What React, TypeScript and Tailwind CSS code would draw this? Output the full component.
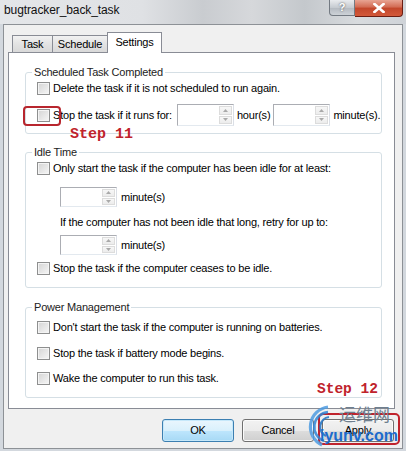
import React from "react";

const Check = () => (
  <span className="block w-[13px] h-[13px] shrink-0 border border-[#8e8f8f] bg-[linear-gradient(135deg,#d4d4d4,#f6f6f6)] shadow-[inset_0_0_0_1px_#f4f4f4]" />
);

const Arrow = ({ up }: { up?: boolean }) => (
  <svg width="5" height="3" viewBox="0 0 5 3">
    {up ? <path d="M0 3 L2.5 0 L5 3 Z" fill="#a9a9a9" /> : <path d="M0 0 L2.5 3 L5 0 Z" fill="#a9a9a9" />}
  </svg>
);

const Spin = ({ h }: { h: string }) => (
  <div className={`flex w-[57px] ${h} border border-[#abadb3] border-b-[#e3e9ef] border-r-[#dbdfe6] bg-white shrink-0`}>
    <div className="flex-1" />
    <div className="flex flex-col w-[15px] gap-px p-px">
      <div className="flex-1 flex items-center justify-center border border-[#dcdcdc] bg-[linear-gradient(#f7f7f7,#ececec)]">
        <Arrow up />
      </div>
      <div className="flex-1 flex items-center justify-center border border-[#dcdcdc] bg-[linear-gradient(#f7f7f7,#ececec)]">
        <Arrow />
      </div>
    </div>
  </div>
);

const Row = ({ children, cls }: { children: React.ReactNode; cls: string }) => (
  <div className={`flex items-center h-[16px] pl-[11px] gap-[3px] ${cls}`}>
    <Check />
    <span className="whitespace-nowrap">{children}</span>
  </div>
);

const Group = ({ title, cls, children }: { title: string; cls: string; children: React.ReactNode }) => (
  <fieldset className={`ml-[16px] mr-[12px] border border-[#d5dfe5] rounded-[3px] ${cls}`}>
    <legend className="ml-[6px] px-[2px] h-[15px] leading-[15px] text-[#222]">{title}</legend>
    {children}
  </fieldset>
);

const Btn = ({ label, def }: { label: string; def?: boolean }) => (
  <div
    className={`w-[72px] h-[23px] rounded-[3px] flex items-center justify-center border ${
      def
        ? "border-[#3c7fb1] bg-[linear-gradient(#eaf6fd_0%,#d9f0fc_50%,#bee6fd_51%,#a7d9f5_100%)] shadow-[inset_0_0_0_1px_#c6e8fa]"
        : "border-[#707070] bg-[linear-gradient(#f2f2f2_0%,#ebebeb_50%,#dddddd_51%,#cfcfcf_100%)] shadow-[inset_0_0_0_1px_#fbfbfb]"
    }`}
  >
    {label}
  </div>
);

export default function App() {
  return (
    <div className="relative w-[406px] h-[451px] overflow-hidden bg-[#d3d8de] font-['Liberation_Sans',Arial,sans-serif] text-[11px] tracking-[-0.2px] text-black">
      {/* title bar */}
      <div className="flex h-[24px] bg-[linear-gradient(90deg,#e4e6e9_0%,#dfe1e4_35%,#c9ccd0_50%,#d6d8db_62%,#c4c8cc_75%,#d8dbde_88%,#cfd3d8_100%)]">
        <div className="pl-[4px] pt-[3px] text-[12px] leading-[15px] tracking-[-0.1px] text-[#111]">bugtracker_back_task</div>
        <div className="ml-auto flex items-start mr-[3px]">
          <div className="w-[26px] h-[16px] rounded-bl-[4px] border border-t-0 border-[#737a82] bg-[linear-gradient(#e9ebee,#c6cbd1_50%,#b3b9c0_51%,#cdd2d7)] flex items-center justify-center text-[11px] font-bold text-white [text-shadow:0_0_2px_#444]">
            ?
          </div>
          <div className="w-[48px] h-[17px] rounded-br-[4px] border border-t-0 border-l-0 border-[#6b1d12] bg-[linear-gradient(#e8a493,#d26a52_45%,#c2462b_50%,#d3593a_100%)] flex items-center justify-center">
            <svg width="12" height="10" viewBox="0 0 12 10">
              <path d="M1.5 1 L10.5 9 M10.5 1 L1.5 9" stroke="#ffffff" strokeWidth="2.6" strokeLinecap="square" />
            </svg>
          </div>
        </div>
      </div>

      {/* client area */}
      <div className="mx-[3px] h-[425px] border border-[#8d9196] bg-[#f0f0f0] flex flex-col">
        {/* tabs */}
        <div className="mt-[7px] ml-[8px] h-[20px] flex items-end">
          <div className="w-[41px] h-[17px] border border-b-0 border-[#898c95] bg-[linear-gradient(#f2f2f2,#e3e3e3_50%,#d9d9d9)] flex items-center justify-center">
            Task
          </div>
          <div className="-ml-px w-[56px] h-[17px] border border-b-0 border-[#898c95] bg-[linear-gradient(#f2f2f2,#e3e3e3_50%,#d9d9d9)] flex items-center justify-center">
            Schedule
          </div>
          <div className="relative z-10 -ml-px -mb-px w-[55px] h-[21px] border border-b-0 border-[#898c95] bg-white flex items-center justify-center pb-[1px]">
            Settings
          </div>
        </div>

        {/* panel */}
        <div className="ml-[4px] mr-[7px] h-[357px] border border-[#898c95] bg-white flex flex-col">
          <Group title="Scheduled Task Completed" cls="mt-[12px] pb-[7px]">
            <Row cls="">Delete the task if it is not scheduled to run again.</Row>
            <div className="flex items-center h-[22px] mt-[8px] pl-[11px]">
              <Check />
              <span className="ml-[3px] whitespace-nowrap">Stop the task if it runs for:</span>
              <div className="ml-[5px]">
                <Spin h="h-[22px]" />
              </div>
              <span className="ml-[3px] whitespace-nowrap">hour(s)</span>
              <div className="ml-[3px]">
                <Spin h="h-[22px]" />
              </div>
              <span className="ml-[3px] whitespace-nowrap">minute(s).</span>
            </div>
          </Group>

          <Group title="Idle Time" cls="mt-[11px] pb-[11px]">
            <Row cls="">Only start the task if the computer has been idle for at least:</Row>
            <div className="flex items-center mt-[11px] pl-[34px]">
              <Spin h="h-[20px]" />
              <span className="ml-[4px]">minute(s)</span>
            </div>
            <div className="mt-[8px] pl-[34px] h-[15px] leading-[15px] whitespace-nowrap">
              If the computer has not been idle that long, retry for up to:
            </div>
            <div className="flex items-center mt-[5px] pl-[34px]">
              <Spin h="h-[20px]" />
              <span className="ml-[4px]">minute(s)</span>
            </div>
            <Row cls="mt-[5px]">Stop the task if the computer ceases to be idle.</Row>
          </Group>

          <Group title="Power Management" cls="mt-[12px] pb-[11px]">
            <Row cls="mt-[4px]">Don't start the task if the computer is running on batteries.</Row>
            <Row cls="mt-[10px]">Stop the task if battery mode begins.</Row>
            <Row cls="mt-[9px]">Wake the computer to run this task.</Row>
          </Group>
        </div>

        {/* buttons */}
        <div className="mt-[10px] flex justify-end gap-[8px] pr-[8px]">
          <Btn label="OK" def />
          <Btn label="Cancel" />
          <Btn label="Apply" />
        </div>
      </div>

      {/* annotations */}
      <div className="absolute left-[23px] top-[106px] w-[38px] h-[20px] border-2 border-[#b8262e] rounded-[4px]" />
      <div className="absolute left-[70px] top-[126px] text-[15px] leading-[18px] tracking-normal font-bold font-['Liberation_Mono',monospace] text-[#c0232c]">
        Step 11
      </div>
      <div className="absolute left-[317px] top-[380px] text-[14.5px] leading-[18px] tracking-normal font-bold font-['Liberation_Mono',monospace] text-[#c0232c]">
        Step 12
      </div>
      <div className="absolute left-[318px] top-[413px] w-[82px] h-[32px] border-2 border-[#c0232c] rounded-[5px]" />

      {/* watermark */}
      <svg className="absolute left-[298px] top-[403px]" width="50" height="46" viewBox="0 0 50 46">
        <path d="M30 4 A20 20 0 0 0 24 42" fill="none" stroke="#4d9be0" strokeWidth="3.2" opacity="0.85" />
        <path d="M30 9 A15 15 0 0 0 26 38" fill="none" stroke="#2f86d6" strokeWidth="2.6" opacity="0.85" />
        <path d="M31 14 A10 10 0 0 0 28 33" fill="none" stroke="#1f72c4" strokeWidth="2.2" opacity="0.85" />
      </svg>
      <div className="absolute left-[339px] top-[404px] text-[17px] leading-[20px] tracking-normal text-[#6f7f8f] font-['Noto_Sans_CJK_SC',sans-serif]">
        运维网
      </div>
      <div className="absolute left-[320px] top-[427px] text-[16px] leading-[18px] tracking-normal font-bold text-[#1c6bcc]">
        iyunv.com
      </div>
    </div>
  );
}
